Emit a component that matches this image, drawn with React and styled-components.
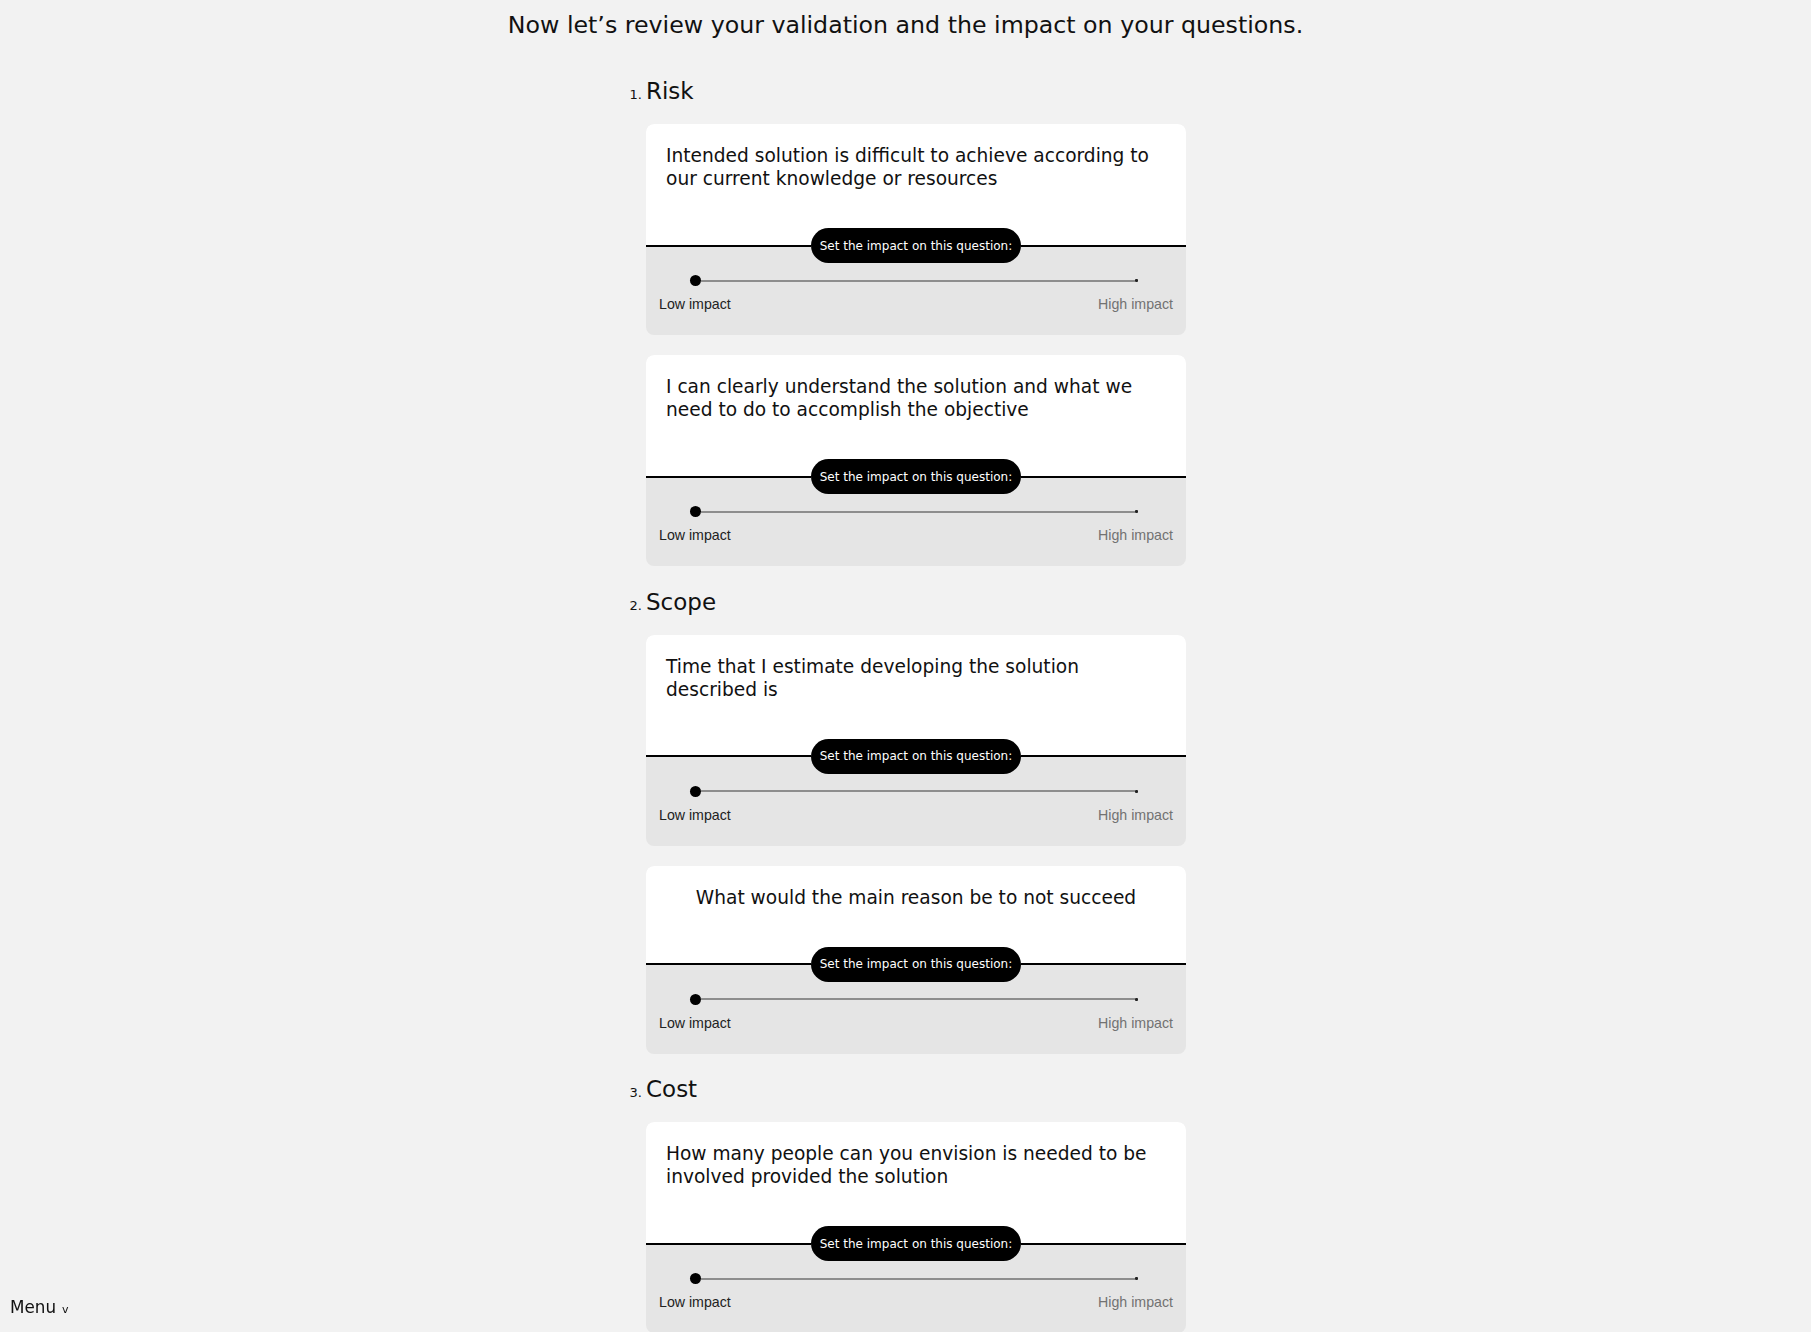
import React from "react";
import styled, { createGlobalStyle } from "styled-components";

const GlobalStyle = createGlobalStyle`
  html, body { margin: 0; padding: 0; background: #f2f2f2; }
  body { font-family: "DejaVu Sans", "Noto Sans", sans-serif; color: #111; }
  * { box-sizing: border-box; }
`;

const Page = styled.main`
  display: flex;
  flex-direction: column;
  align-items: center;
  padding-top: 11px;
`;

const Title = styled.h1`
  margin: 0;
  font-size: 23.7px;
  line-height: 28px;
  font-weight: 400;
  color: #111;
`;

const Sections = styled.ol`
  width: 561px;
  margin: 38px 0 0;
  padding: 0 0 0 21px;
  list-style: decimal outside;
`;

const Section = styled.li`
  & + & { margin-top: 21.5px; }
  &::marker { font-size: 13px; color: #111; }
`;

const SectionTitle = styled.h2`
  margin: 0;
  font-size: 23px;
  line-height: 28px;
  font-weight: 400;
  color: #111;
`;

const CardList = styled.div`
  display: flex;
  flex-direction: column;
  gap: 20px;
  margin-top: 19px;
`;

const Card = styled.article`
  border-radius: 8px;
  overflow: hidden;
  background: #e5e5e5;
`;

const QuestionArea = styled.div`
  background: #fff;
  padding: 20px 20px 38px;
  display: flex;
  justify-content: center;
`;

const Question = styled.p`
  margin: 0;
  font-size: 18.6px;
  line-height: 23px;
  text-align: left;
  color: #111;
`;

const Divider = styled.div`
  display: flex;
  align-items: center;
  height: 35px;
  background: linear-gradient(#fff 50%, #e5e5e5 50%);
`;

const Rule = styled.span`
  flex: 1;
  height: 2px;
  background: #000;
`;

const Pill = styled.span`
  height: 35px;
  padding: 0 9px;
  display: flex;
  align-items: center;
  background: #000;
  color: #fff;
  font-size: 12px;
  border-radius: 18px;
  white-space: nowrap;
`;

const ImpactArea = styled.div`
  padding: 12px 13px 23px;
`;

const Slider = styled.div`
  display: flex;
  align-items: center;
  height: 11px;
  margin: 0 35px 0 31px;
`;

const Thumb = styled.span`
  width: 11px;
  height: 11px;
  border-radius: 50%;
  background: #000;
  flex: none;
`;

const Track = styled.span`
  flex: 1;
  height: 2px;
  background: #8d8d8d;
`;

const TrackEnd = styled.span`
  width: 3px;
  height: 3px;
  border-radius: 1px;
  background: #222;
  flex: none;
`;

const Labels = styled.div`
  display: flex;
  justify-content: space-between;
  margin-top: 10px;
`;

const Label = styled.span`
  font-family: "Liberation Sans", Arial, sans-serif;
  font-size: 14.2px;
  line-height: 16px;
  color: ${(p) => (p.$active ? "#222" : "#727272")};
`;

const Menu = styled.button`
  position: fixed;
  left: 10px;
  bottom: 12px;
  display: flex;
  align-items: baseline;
  gap: 6px;
  padding: 0;
  border: 0;
  background: none;
  font-family: "DejaVu Sans", sans-serif;
  font-size: 16.8px;
  line-height: 20px;
  color: #111;
`;

const Caret = styled.span`
  font-size: 11px;
`;

const sections = [
  {
    title: "Risk",
    questions: [
      "Intended solution is difficult to achieve according to our current knowledge or resources",
      "I can clearly understand the solution and what we need to do to accomplish the objective",
    ],
  },
  {
    title: "Scope",
    questions: [
      "Time that I estimate developing the solution described is",
      "What would the main reason be to not succeed",
    ],
  },
  {
    title: "Cost",
    questions: [
      "How many people can you envision is needed to be involved provided the solution",
    ],
  },
];

function QuestionCard({ text }) {
  return (
    <Card>
      <QuestionArea>
        <Question>{text}</Question>
      </QuestionArea>
      <Divider>
        <Rule />
        <Pill>Set the impact on this question:</Pill>
        <Rule />
      </Divider>
      <ImpactArea>
        <Slider>
          <Thumb />
          <Track />
          <TrackEnd />
        </Slider>
        <Labels>
          <Label $active>Low impact</Label>
          <Label>High impact</Label>
        </Labels>
      </ImpactArea>
    </Card>
  );
}

export default function App() {
  return (
    <>
      <GlobalStyle />
      <Page>
        <Title>Now let’s review your validation and the impact on your questions.</Title>
        <Sections>
          {sections.map((s) => (
            <Section key={s.title}>
              <SectionTitle>{s.title}</SectionTitle>
              <CardList>
                {s.questions.map((q) => (
                  <QuestionCard key={q} text={q} />
                ))}
              </CardList>
            </Section>
          ))}
        </Sections>
      </Page>
      <Menu type="button">
        Menu <Caret>v</Caret>
      </Menu>
    </>
  );
}
